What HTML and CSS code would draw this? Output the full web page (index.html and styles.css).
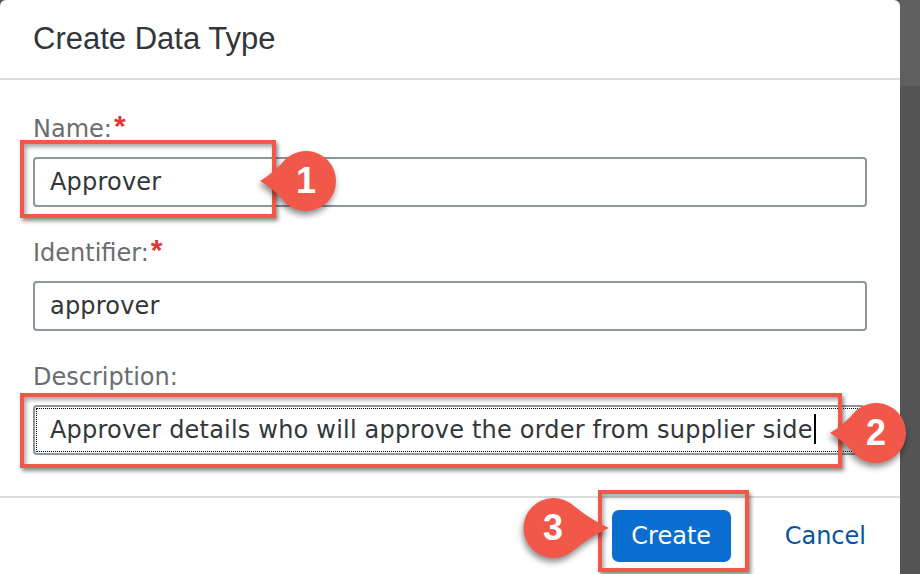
FILE: index.html
```html
<!DOCTYPE html>
<html lang="en">
<head>
<meta charset="utf-8">
<title>Create Data Type</title>
<link rel="stylesheet" href="styles.css">
</head>
<body>
<div class="page">
  <div class="dialog">
    <header class="dialog-header">
      <h1 class="title">Create Data Type</h1>
    </header>
    <div class="dialog-content">
      <div class="field">
        <label class="label">Name:<span class="req">*</span></label>
        <div class="input">Approver</div>
      </div>
      <div class="field">
        <label class="label">Identifier:<span class="req">*</span></label>
        <div class="input">approver</div>
      </div>
      <div class="field">
        <label class="label">Description:</label>
        <div class="input input-focus">Approver details who will approve the order from supplier side<span class="caret"></span></div>
      </div>
    </div>
    <footer class="dialog-footer">
      <button class="btn btn-primary">Create</button>
      <button class="btn btn-link">Cancel</button>
    </footer>
  </div>
  <div class="backdrop">
    <div class="backdrop-top"></div>
    <div class="backdrop-rest"></div>
  </div>

  <div class="mark mark-name"></div>
  <div class="mark mark-desc"></div>
  <div class="mark mark-create"></div>

  <div class="callout callout-1">
    <svg class="pin" viewBox="-50 -35 100 70" width="100" height="70"><path d="M-46 0 Q-32 -8 -19.6 -22.7 A30 30 0 1 1 -19.6 22.7 Q-32 8 -46 0 Z"/></svg>
    <span class="num">1</span>
  </div>
  <div class="callout callout-2">
    <svg class="pin" viewBox="-50 -35 100 70" width="100" height="70"><path d="M-46 0 Q-32 -8 -19.6 -22.7 A30 30 0 1 1 -19.6 22.7 Q-32 8 -46 0 Z"/></svg>
    <span class="num">2</span>
  </div>
  <div class="callout callout-3">
    <svg class="pin" viewBox="-60 -35 120 70" width="120" height="70"><path d="M56 0 Q38 -8 21 -21.9 A30 30 0 1 0 21 21.9 Q38 8 56 0 Z"/></svg>
    <span class="num">3</span>
  </div>
</div>
</body>
</html>
```

FILE: styles.css
```css
* { box-sizing: border-box; }

html, body {
  margin: 0;
  padding: 0;
  height: 574px;
  overflow: hidden;
}

body {
  background: #555555;
  font-family: "DejaVu Sans", sans-serif;
}

.page {
  position: relative;
  display: flex;
  width: 920px;
  height: 574px;
}

.dialog {
  width: 900px;
  flex: 0 0 900px;
  background: #ffffff;
  border-radius: 6px 6px 0 0;
  display: flex;
  flex-direction: column;
}

.dialog-header {
  height: 80px;
  border-bottom: 2px solid #dcdcdc;
  padding: 0 33px;
}

.title {
  margin: 0;
  font-family: "Liberation Sans", Arial, sans-serif;
  font-weight: normal;
  font-size: 31px;
  line-height: 78px;
  color: #32363a;
}

.dialog-content {
  padding: 35px 33px 41px 33px;
  display: flex;
  flex-direction: column;
  gap: 32px;
  border-bottom: 2px solid #dcdcdc;
}

.field {
  display: flex;
  flex-direction: column;
  gap: 14px;
}

.label {
  font-size: 24px;
  line-height: 28px;
  color: #6a6d70;
  display: flex;
  align-items: flex-start;
}

.req {
  color: #e0353a;
  font-family: "Liberation Sans", Arial, sans-serif;
  font-weight: bold;
  font-size: 30px;
  line-height: 22px;
  margin-left: 2px;
}

.input {
  height: 50px;
  border: 2px solid #8d949b;
  border-radius: 4px;
  padding: 0 15px;
  font-size: 24px;
  line-height: 46px;
  letter-spacing: 0.2px;
  color: #32363a;
  white-space: nowrap;
  overflow: hidden;
  width: 834px;
}

.input-focus {
  width: 832px;
  outline: 1px dotted #000000;
  outline-offset: -4px;
}

.caret {
  display: inline-block;
  width: 2px;
  height: 30px;
  background: #000;
  vertical-align: -6px;
  margin-left: 1px;
}

.dialog-footer {
  display: flex;
  justify-content: flex-end;
  align-items: flex-start;
  gap: 54px;
  padding: 12px 34px 0 0;
  flex: 1;
}

.btn {
  font-family: "DejaVu Sans", sans-serif;
  font-size: 24px;
  border: none;
  margin: 0;
  cursor: pointer;
}

.btn-primary {
  width: 119px;
  height: 52px;
  background: #0a6ed1;
  color: #ffffff;
  border-radius: 7px;
  padding: 0;
}

.btn-link {
  background: transparent;
  color: #0854a0;
  padding: 0;
  height: 52px;
}

.backdrop {
  flex: 1;
  display: flex;
  flex-direction: column;
}

.backdrop-top {
  height: 86px;
  background: #5f5f5f;
}

.backdrop-rest {
  flex: 1;
  background: #545454;
}

/* annotation overlays */
.mark {
  position: absolute;
  border: 4px solid #f2584a;
  box-shadow: 2px 3px 4px rgba(0, 0, 0, 0.45), inset 2px 3px 4px rgba(0, 0, 0, 0.35);
}

.mark-name { left: 20px; top: 140px; width: 256px; height: 78px; }
.mark-desc { left: 20px; top: 393px; width: 822px; height: 75px; }
.mark-create { left: 598px; top: 490px; width: 151px; height: 82px; }

.callout {
  position: absolute;
  width: 100px;
  height: 70px;
}

.pin {
  display: block;
  fill: #f2584a;
  filter: drop-shadow(-1px 4px 3px rgba(0, 0, 0, 0.45));
}

.num {
  position: absolute;
  top: 0;
  left: 50px;
  width: 0;
  height: 70px;
  display: flex;
  justify-content: center;
  align-items: center;
  font-family: "Liberation Sans", Arial, sans-serif;
  font-weight: bold;
  font-size: 36px;
  color: #ffffff;
}

.callout-1 { left: 256px; top: 146px; }
.callout-2 { left: 826px; top: 398px; }
.callout-3 { left: 493px; top: 493px; width: 120px; }
.callout-3 .num { left: 60px; }
```
